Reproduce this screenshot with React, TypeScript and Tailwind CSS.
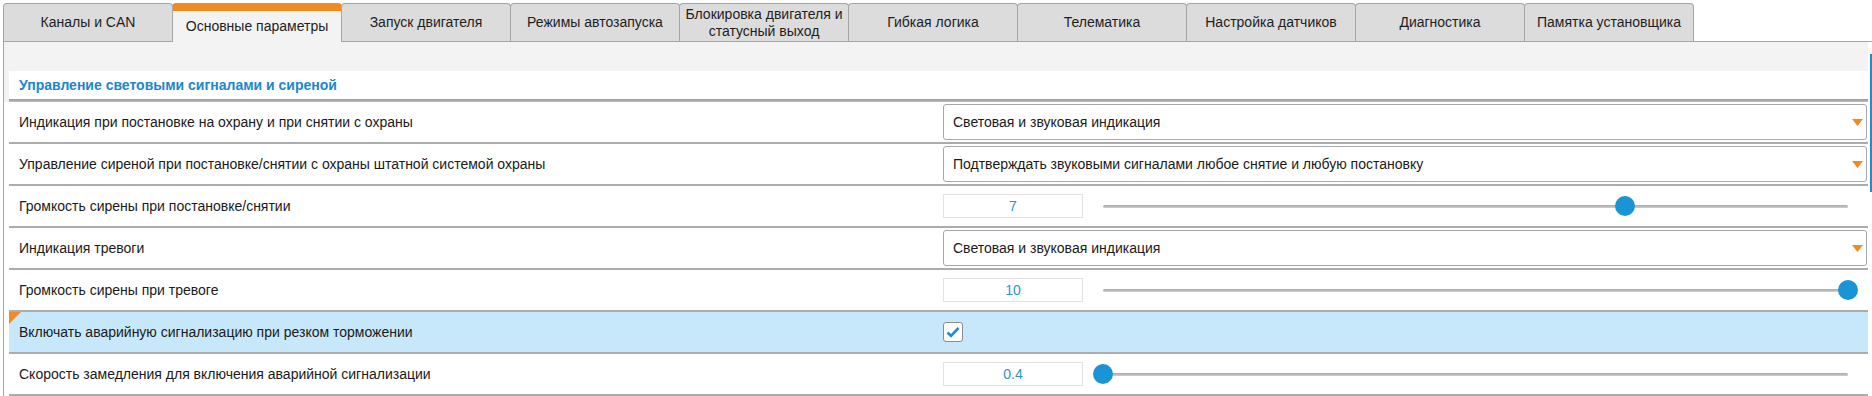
import React from 'react';

const tabs = [
  'Каналы и CAN',
  'Основные параметры',
  'Запуск двигателя',
  'Режимы автозапуска',
  'Блокировка двигателя и статусный выход',
  'Гибкая логика',
  'Телематика',
  'Настройка датчиков',
  'Диагностика',
  'Памятка установщика',
];

type Row =
  | { kind: 'select'; label: string; value: string }
  | { kind: 'slider'; label: string; value: number; min: number; max: number; text: string }
  | { kind: 'check'; label: string; checked: boolean; changed?: boolean };

const rows: Row[] = [
  { kind: 'select', label: 'Индикация при постановке на охрану и при снятии с охраны', value: 'Световая и звуковая индикация' },
  { kind: 'select', label: 'Управление сиреной при постановке/снятии с охраны штатной системой охраны', value: 'Подтверждать звуковыми сигналами любое снятие и любую постановку' },
  { kind: 'slider', label: 'Громкость сирены при постановке/снятии', value: 7, min: 0, max: 10, text: '7' },
  { kind: 'select', label: 'Индикация тревоги', value: 'Световая и звуковая индикация' },
  { kind: 'slider', label: 'Громкость сирены при тревоге', value: 10, min: 0, max: 10, text: '10' },
  { kind: 'check', label: 'Включать аварийную сигнализацию при резком торможении', checked: true, changed: true },
  { kind: 'slider', label: 'Скорость замедления для включения аварийной сигнализации', value: 0.4, min: 0.4, max: 1, text: '0.4' },
];

function Tab({ title, active, first }: { title: string; active: boolean; first: boolean }) {
  return (
    <div
      className={`w-[170px] flex items-center justify-center text-center text-[14px] leading-[17px] text-[#1e1e1e] rounded-t-[4px] border-x border-[#a5a5a5] ${
        first ? '' : '-ml-px'
      } ${
        active
          ? 'relative z-10 h-[39px] -mb-px bg-[#f3f3f3] border-t-[8px] border-t-[#f28a22]'
          : 'h-[38px] bg-[#dcdcdc] border-t'
      }`}
    >
      <span className="px-1">{title}</span>
    </div>
  );
}

function Select({ value }: { value: string }) {
  return (
    <div className="h-[36px] flex items-center justify-between bg-white border border-[#a8a8a8] rounded-[3px] pl-[9px] pr-[3px]">
      <span className="text-[14px] text-[#1a1a1a]">{value}</span>
      <svg width="11" height="7" viewBox="0 0 11 7">
        <path d="M0 0 H11 L5.5 7 Z" fill="#f28a22" />
      </svg>
    </div>
  );
}

function Slider({ value, min, max, text }: { value: number; min: number; max: number; text: string }) {
  const pct = ((value - min) / (max - min)) * 100;
  return (
    <div className="flex items-center h-full">
      <div className="w-[140px] h-[24px] flex items-center justify-center bg-white border border-[#e3e3e3] text-[14px] text-[#2a93d5]">
        {text}
      </div>
      <div className="ml-[20px] w-[745px] relative h-[20px] flex items-center">
        <div className="w-full h-[3px] rounded-full bg-gradient-to-b from-[#a9a9a9] to-[#cfcfcf]" />
        <div
          className="absolute top-0 w-[20px] h-[20px] -ml-[10px] rounded-full bg-[#1b94d5]"
          style={{ left: `${pct}%` }}
        />
      </div>
    </div>
  );
}

function Check({ checked }: { checked: boolean }) {
  return (
    <div className="w-[20px] h-[20px] flex items-center justify-center bg-white border border-[#8c8c8c] rounded-[3px]">
      {checked && (
        <svg width="14" height="12" viewBox="0 0 14 12">
          <path d="M1.5 6.5 L5 10 L12.5 2" fill="none" stroke="#1b8fd3" strokeWidth="2.6" />
        </svg>
      )}
    </div>
  );
}

export default function App() {
  return (
    <div
      className="w-[1872px] h-[396px] overflow-hidden bg-white"
      style={{ fontFamily: '"Liberation Sans", Arial, sans-serif' }}
    >
      <div className="flex pt-[3px] pl-[3px] items-end">
        {tabs.map((t, i) => (
          <Tab key={t} title={t} active={i === 1} first={i === 0} />
        ))}
      </div>

      <div className="ml-[3px] flex border-t border-l border-[#a5a5a5] h-[355px]">
        <div className="flex-1 flex flex-col">
          <div className="h-[30px] bg-[#f3f3f3]" />
          <div className="bg-[#f3f3f3] pl-[5px]">
            <div className="h-[28px] bg-white flex items-center pl-[10px] text-[14px] font-bold text-[#1a87d0]">
              Управление световыми сигналами и сиреной
            </div>
            <div className="h-[3px] bg-gradient-to-b from-[#9a9a9a] to-[#bdbdbd]" />
          </div>
          <div className="pl-[5px] bg-white flex-1">
            {rows.map((r) => (
              <div
                key={r.label}
                className={`relative h-[42px] flex border-b-2 border-[#acacac] ${
                  r.kind === 'check' ? 'bg-[#c6e8fa]' : 'bg-white'
                }`}
              >
                {r.kind === 'check' && r.changed && (
                  <div className="absolute top-0 left-0 w-0 h-0 border-t-[12px] border-t-[#f0892a] border-r-[12px] border-r-transparent" />
                )}
                <div className="flex-1 flex items-center pl-[10px] text-[14px] text-[#1a1a1a]">{r.label}</div>
                <div className="w-[924px] mr-[1px] flex flex-col justify-center">
                  {r.kind === 'select' && <Select value={r.value} />}
                  {r.kind === 'slider' && <Slider value={r.value} min={r.min} max={r.max} text={r.text} />}
                  {r.kind === 'check' && <Check checked={r.checked} />}
                </div>
              </div>
            ))}
          </div>
        </div>
        <div className="w-[4px] bg-white flex justify-end">
          <div className="w-[2px] h-[138px] mt-[12px] bg-[#1b8fd3]" />
        </div>
      </div>
    </div>
  );
}
